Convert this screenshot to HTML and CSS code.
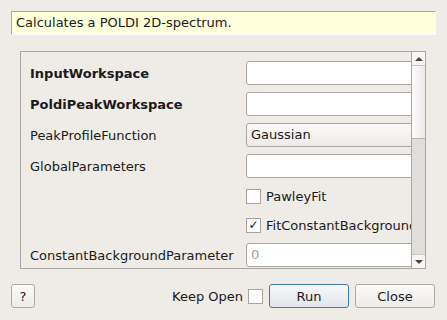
FILE: index.html
```html
<!DOCTYPE html>
<html lang="en">
<head>
  <meta charset="UTF-8" />
  <title>PoldiCalculateSpectrum2D</title>
  <link rel="stylesheet" href="styles.css">
</head>
<body>
  <div class="description">Calculates a POLDI 2D-spectrum.</div>

  <div class="props">
    <div class="viewport">
      <div class="row">
        <label class="name required">InputWorkspace</label>
        <div class="field"></div>
      </div>
      <div class="row">
        <label class="name required">PoldiPeakWorkspace</label>
        <div class="field"></div>
      </div>
      <div class="row">
        <label class="name">PeakProfileFunction</label>
        <div class="field combo">Gaussian</div>
      </div>
      <div class="row">
        <label class="name">GlobalParameters</label>
        <div class="field"></div>
      </div>
      <div class="row check-row">
        <span class="name"></span>
        <div class="check-item"><span class="box"></span>PawleyFit</div>
      </div>
      <div class="row check-row">
        <span class="name"></span>
        <div class="check-item"><span class="box checked">&#10003;</span>FitConstantBackground</div>
      </div>
      <div class="row">
        <label class="name">ConstantBackgroundParameter</label>
        <div class="field placeholder">0</div>
      </div>
    </div>
    <div class="scrollbar">
      <div class="arrow up"></div>
      <div class="handle"></div>
      <div class="trough"></div>
      <div class="arrow down"></div>
    </div>
  </div>

  <div class="buttons">
    <button class="btn help">?</button>
    <div class="spacer"></div>
    <span class="keep">Keep Open</span>
    <span class="box keep-box"></span>
    <button class="btn run">Run</button>
    <button class="btn">Close</button>
  </div>
</body>
</html>
```

FILE: styles.css
```css
body {
  margin: 0;
  width: 447px;
  height: 320px;
  background-color: #efebe7;
  font-family: 'DejaVu Sans', sans-serif;
  font-size: 13px;
  color: #1a1a1a;
  display: flex;
  flex-direction: column;
  overflow: hidden;
}
.description {
  margin: 11px 11px 0 11px;
  height: 22px;
  line-height: 22px;
  padding-left: 4px;
  background-color: #ffffdc;
  border-top: 1px solid #a9a6a1;
  border-left: 1px solid #a9a6a1;
  border-bottom: 1px solid #fbfaf9;
  border-right: 1px solid #fbfaf9;
}
.props {
  margin: 16px 0 0 20px;
  width: 404px;
  height: 216px;
  border: 1px solid #aaa6a1;
  display: flex;
}
.viewport {
  flex: 1;
  overflow: hidden;
  padding: 9px 0 0 9px;
  display: flex;
  flex-direction: column;
  gap: 7px;
}
.row {
  display: flex;
  align-items: center;
  height: 24px;
  flex-shrink: 0;
}
.check-row {
  height: 22px;
}
.name {
  width: 216px;
  flex-shrink: 0;
}
.required {
  font-weight: bold;
}
.field {
  width: 190px;
  flex-shrink: 0;
  height: 22px;
  line-height: 22px;
  padding-left: 4px;
  background-color: #fff;
  border: 1px solid #aaa7a2;
  border-radius: 3px;
}
.combo {
  background: linear-gradient(#fbfaf9, #ecebe8);
}
.placeholder {
  color: #a0a0a0;
}
.check-item {
  display: flex;
  align-items: center;
  gap: 5px;
  white-space: nowrap;
}
.box {
  width: 13px;
  height: 13px;
  background-color: #fff;
  border: 1px solid #a8a5a0;
  display: inline-flex;
  align-items: center;
  justify-content: center;
  font-size: 12px;
  font-weight: bold;
  line-height: 1;
  color: #111;
}
.scrollbar {
  width: 13px;
  border-left: 1px solid #aaa6a1;
  display: flex;
  flex-direction: column;
  background-color: #dfdeda;
}
.arrow {
  height: 13px;
  background-color: #f7f6f4;
  position: relative;
}
.arrow.up {
  border-bottom: 1px solid #c9c6c1;
}
.arrow.down {
  border-top: 1px solid #c9c6c1;
}
.arrow::after {
  content: "";
  position: absolute;
  left: 3px;
  top: 5px;
  border-left: 4px solid transparent;
  border-right: 4px solid transparent;
}
.arrow.up::after {
  border-bottom: 4px solid #444;
}
.arrow.down::after {
  border-top: 4px solid #444;
}
.handle {
  height: 72px;
  background: linear-gradient(to right, #fdfdfc, #eceae7);
  border-bottom: 1px solid #b5b2ad;
}
.trough {
  flex: 1;
}
.buttons {
  margin: 15px 12px 0 11px;
  display: flex;
  align-items: center;
  height: 24px;
}
.spacer {
  flex: 1;
}
.btn {
  height: 24px;
  width: 80px;
  font-family: 'DejaVu Sans', sans-serif;
  font-size: 13px;
  color: #1a1a1a;
  background: linear-gradient(#fbfaf9, #ecebe8);
  border: 1px solid #aeaaa5;
  border-radius: 3px;
  padding: 0;
  margin-left: 6px;
}
.help {
  width: 24px;
  margin-left: 0;
}
.run {
  border-color: #3b7bb0;
  background: linear-gradient(#f6f7f8, #e2e6ea);
}
.keep {
  margin-right: 5px;
}
.keep-box {
  margin-right: 0;
}
```
